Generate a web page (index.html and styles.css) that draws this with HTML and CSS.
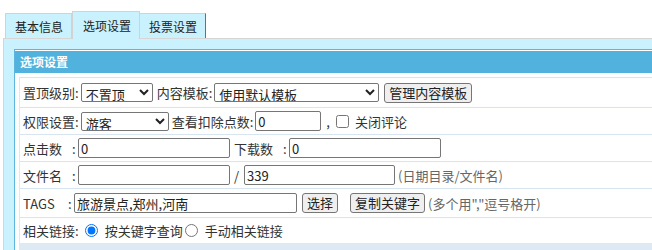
FILE: index.html
```html
<!DOCTYPE html>
<html>
<head>
    <title>选项设置</title>
    <link rel="stylesheet" href="styles.css">
</head>
<body>
    <div class="tabs">
        <span class="tab">基本信息</span>
        <span class="tab active">选项设置</span>
        <span class="tab last">投票设置</span>
    </div>
    <div class="panel">
        <div class="box">
            <div class="hd">选项设置</div>
            <div class="rows">
                <div class="row r1">
                    <span>置顶级别:</span>
                    <select class="sel-top"><option>不置顶</option></select>
                    <span class="ml3">内容模板:</span>
                    <select class="sel-tpl"><option>使用默认模板</option></select>
                    <button class="btn ml5">管理内容模板</button>
                </div>
                <div class="row">
                    <span>权限设置:</span>
                    <select class="sel-rank"><option>游客</option></select>
                    <span class="ml3">查看扣除点数:</span>
                    <input type="text" class="in-money" value="0">
                    <span class="comma">,</span>
                    <input type="checkbox" class="chk">
                    <span>关闭评论</span>
                </div>
                <div class="row">
                    <span class="lbl">点击数</span><span class="colon">:</span>
                    <input type="text" class="in-mid" value="0">
                    <span class="lbl ml4">下载数</span><span class="colon">:</span>
                    <input type="text" class="in-mid" value="0">
                </div>
                <div class="row">
                    <span class="lbl">文件名</span><span class="colon">:</span>
                    <input type="text" class="in-mid" value="">
                    <span class="slash">/</span>
                    <input type="text" class="in-file" value="339">
                    <span class="tip">(日期目录/文件名)</span>
                </div>
                <div class="row r5">
                    <span class="lbl tags">TAGS</span><span class="colon">:</span>
                    <input type="text" class="in-tags" value="旅游景点,郑州,河南">
                    <button class="btn ml5">选择</button>
                    <button class="btn ml12">复制关键字</button>
                    <span class="tip">(多个用","逗号格开)</span>
                </div>
                <div class="row r6">
                    <span>相关链接:</span>
                    <input type="radio" name="link" class="rad" checked>
                    <span>按关键字查询</span>
                    <input type="radio" name="link" class="rad">
                    <span>手动相关链接</span>
                </div>
                <div class="foot"></div>
            </div>
        </div>
    </div>
</body>
</html>
```

FILE: styles.css
```css
body {
    margin: 0;
    background-color: #fff;
    font-family: "Noto Sans CJK SC", "Microsoft YaHei", sans-serif;
    font-size: 13px;
    color: #333;
    overflow: hidden;
}

.tabs {
    display: flex;
    align-items: flex-end;
    padding: 11px 0 0 5px;
}

.tab {
    display: flex;
    align-items: center;
    height: 24px;
    padding: 0 8px 0 9px;
    font-size: 12px;
    color: #222;
    background-color: #c9f1fe;
    border: 1px solid #d2d2d2;
    border-bottom: none;
}

.tab.active {
    height: 27px;
    padding: 0 8px 0 10px;
    position: relative;
    z-index: 1;
    margin-bottom: -1px;
}

.tab.last {
    padding: 0 8px 0 9px;
    border-right: 1px solid #6f6f6f;
    border-left: none;
}

.panel {
    margin-left: 3px;
    background-color: #c9f1fe;
    border-top: 1px solid #d6d6d6;
    border-left: 1px solid #d6d6d6;
    padding: 10px 0 20px 10px;
    height: 300px;
}

.box {
    background-color: #fff;
    border: 1px solid #5fb6dd;
    border-right: none;
    padding-top: 1px;
}

.hd {
    height: 22px;
    line-height: 22px;
    background-color: #51b3dd;
    color: #fff;
    font-weight: bold;
    font-size: 12px;
    padding-left: 5px;
}

.rows {
    margin: 4px 0 0 4px;
    border-left: 1px solid #dde8f2;
}

.row {
    display: flex;
    align-items: center;
    height: 26px;
    padding-left: 3px;
    border-top: 1px solid #d8e5f1;
    white-space: nowrap;
}

.row.r1 {
    height: 29px;
}

.row.r5 {
    height: 28px;
}

.row.r6 {
    height: 25px;
}

.foot {
    height: 30px;
    background-color: #dde9f3;
}

select {
    font-family: inherit;
    font-size: 13px;
    height: 19px;
    padding: 0;
    margin: 0 0 0 2px;
    color: #222;
    border: 1px solid #767676;
    border-radius: 2px;
    background-color: #fff;
}

.sel-top {
    width: 72px;
    margin-right: 1px;
}

.sel-tpl {
    width: 165px;
    margin-left: 2px;
}

.sel-rank {
    width: 88px;
}

input[type="text"] {
    font-family: inherit;
    font-size: 13px;
    height: 20px;
    box-sizing: border-box;
    padding: 0 2px;
    margin: 0;
    color: #222;
    border: 1px solid #767676;
    border-radius: 2px;
}

.in-money {
    width: 66px;
    margin-left: 2px !important;
}

.in-mid {
    width: 152px;
    margin-left: 4px !important;
}

.in-file {
    width: 151px;
}

.in-tags {
    width: 223px;
    margin-left: 4px !important;
}

.btn {
    font-family: inherit;
    font-size: 13px;
    height: 20px;
    padding: 0 4px;
    color: #222;
    background-color: #efefef;
    border: 1px solid #767676;
    border-radius: 3px;
    line-height: 16px;
}

.ml3 {
    margin-left: 3px;
}

.ml4 {
    margin-left: 4px;
}

.ml5 {
    margin-left: 5px;
}

.ml12 {
    margin-left: 12px;
}

.lbl {
    display: inline-block;
    width: 49px;
}

.lbl.tags {
    width: 45px;
}

.colon {
    width: 2px;
}

.comma {
    margin: 0 6px 0 5px;
}

.chk {
    width: 13px;
    height: 13px;
    margin: 0 6px 0 0;
}

.rad {
    width: 13px;
    height: 13px;
    margin: 0 7px 0 6px;
}

.rad + span + .rad {
    margin-left: 2px;
}

.slash {
    margin: 0 5px 0 4px;
}

.tip {
    color: #666;
    margin-left: 3px;
}
```
